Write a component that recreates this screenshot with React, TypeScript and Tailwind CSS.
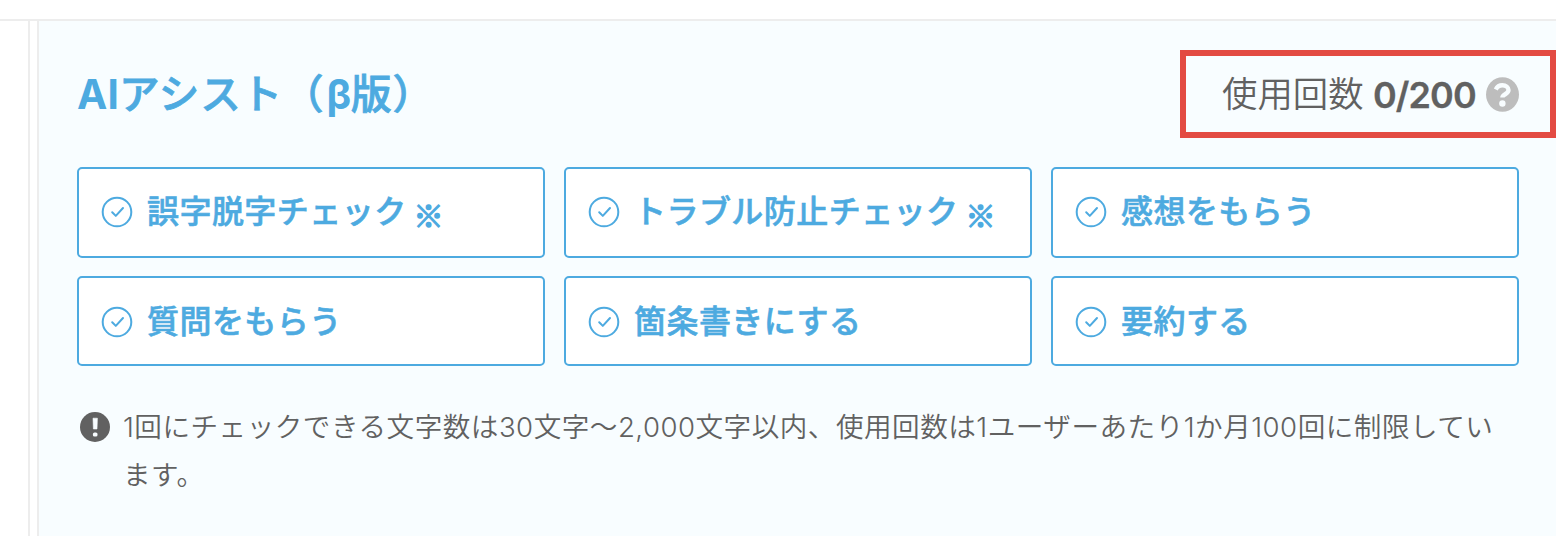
const font = "font-['Inter','Noto_Sans_CJK_JP',sans-serif]";

function CheckIcon() {
  return (
    <svg viewBox="0 0 32 32" className="h-8 w-8 shrink-0" fill="none" stroke="currentColor" strokeWidth="2">
      <circle cx="16" cy="16" r="14.3" />
      <path d="M11.2 16.2l3.6 3.7L22 12" strokeWidth="2" strokeLinecap="round" strokeLinejoin="round" />
    </svg>
  );
}

function HelpIcon() {
  return (
    <svg viewBox="0 0 33 35" className="h-[35px] w-[33px] shrink-0">
      <ellipse cx="16.5" cy="17.5" rx="16.5" ry="17.3" fill="#bdbdbd" />
      <path
        d="M9.8 12.4c1.4-2.8 3.8-4.1 6.6-4.1 3.6 0 6.1 2 6.1 4.8 0 4.2-6.1 4-6.1 7.4"
        fill="none"
        stroke="#f8fdff"
        strokeWidth="4.4"
      />
      <circle cx="16.4" cy="26.5" r="3.2" fill="#f8fdff" />
    </svg>
  );
}

function AlertIcon() {
  return (
    <svg viewBox="0 0 30 30" className="h-[30px] w-[30px] shrink-0">
      <circle cx="15" cy="15" r="15" fill="#616161" />
      <path d="M13 6.2h4.4l-.4 10.8h-3.6z" fill="#f8fdff" stroke="#f8fdff" strokeWidth=".6" strokeLinejoin="round" />
      <rect x="12.9" y="20.4" width="4.6" height="4.2" rx="1.6" fill="#f8fdff" />
    </svg>
  );
}

const actions: { label: string; note?: boolean }[] = [
  { label: "誤字脱字チェック", note: true },
  { label: "トラブル防止チェック", note: true },
  { label: "感想をもらう" },
  { label: "質問をもらう" },
  { label: "箇条書きにする" },
  { label: "要約する" },
];

export default function App() {
  return (
    <div className={`flex h-[536px] w-[1556px] flex-col overflow-hidden bg-white ${font}`}>
      <div className="h-[21px] shrink-0 border-b-2 border-[#ededed]" />
      <div className="flex flex-1">
        <div className="w-[30px] border-r-2 border-[#ededed]" />
        <main className="ml-[7px] flex flex-1 flex-col border-l-2 border-[#ededed] bg-[#f8fdff]">
          <header className="flex justify-between pt-[29px] pl-[38px]">
            <h1 className="flex h-[88px] items-center pt-[2px] text-[40.6px] font-medium whitespace-nowrap text-[#4daae0] [-webkit-text-stroke:0.8px_#4daae0]">
              <span className="font-bold tracking-[0.2px] [-webkit-text-stroke:0]">AI</span>
              <span className="tracking-[0.8px]">アシスト（</span>
              <span className="ml-[2px] font-bold [-webkit-text-stroke:0]">β</span>
              <span className="tracking-[0.8px]">版）</span>
            </h1>
            <div className="flex h-[88px] w-[376px] items-center border-6 border-[#e34b43] pl-[36px] whitespace-nowrap text-[#616161]">
              <span className="w-[151px] pt-[2px] text-[35.4px] font-[350]">使用回数</span>
              <span className="w-[113px] pt-[2px] text-[36px] font-semibold tracking-[-0.9px] [-webkit-text-stroke:0.3px_#616161]">
                0/200
              </span>
              <HelpIcon />
            </div>
          </header>
          <div className="mt-[29px] ml-[38px] grid w-[1442px] grid-cols-3 grid-rows-[91px_90px] gap-x-[19px] gap-y-[18px]">
            {actions.map((action) => (
              <button
                key={action.label}
                className="flex items-center rounded-[5px] border-2 border-[#4daae0] bg-white pt-px pl-[22px] text-[32px] leading-[48px] font-medium whitespace-nowrap text-[#4daae0] [-webkit-text-stroke:0.6px_#4daae0] nth-[-n+3]:pt-0 nth-[-n+3]:pb-px"
              >
                <CheckIcon />
                <span className="ml-[14px] tracking-[0.45px]">{action.label}</span>
                {action.note && (
                  <span className="mt-[4px] ml-[7px] font-['Noto_Sans_CJK_JP',sans-serif] text-[30px] font-bold [-webkit-text-stroke:1.4px_#4daae0]">
                    ※
                  </span>
                )}
              </button>
            ))}
          </div>
          <div className="mt-[37px] ml-[41px] flex text-[27.6px] leading-[48px] text-[#616161]">
            <div className="flex h-[48px] items-center">
              <AlertIcon />
            </div>
            <p className="ml-[13px] font-[350] tracking-[0.49px] whitespace-nowrap">
              1回にチェックできる文字数は30文字〜2,000文字以内、使用回数は1ユーザーあたり1か月100回に制限してい
              <br />
              ます。
            </p>
          </div>
        </main>
      </div>
    </div>
  );
}
